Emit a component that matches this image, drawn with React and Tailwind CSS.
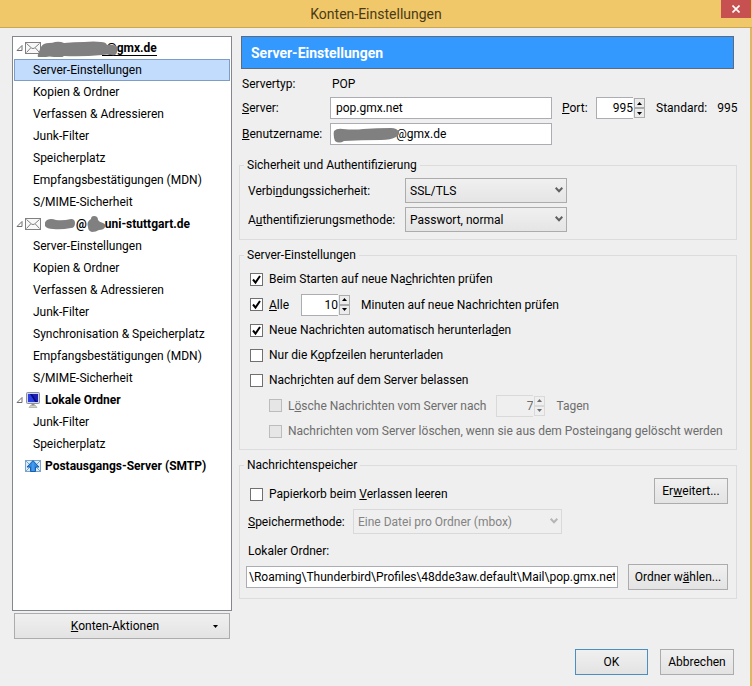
import { useState } from "react";
import clsx from "clsx";

/* ---------------- DATA ---------------- */

const ACCOUNTS = [
  {
    id: "gmx",
    icon: "mail",
    items: [
      "Server-Einstellungen",
      "Kopien & Ordner",
      "Verfassen & Adressieren",
      "Junk-Filter",
      "Speicherplatz",
      "Empfangsbestätigungen (MDN)",
      "S/MIME-Sicherheit",
    ],
  },
  {
    id: "uni",
    icon: "mail",
    items: [
      "Server-Einstellungen",
      "Kopien & Ordner",
      "Verfassen & Adressieren",
      "Junk-Filter",
      "Synchronisation & Speicherplatz",
      "Empfangsbestätigungen (MDN)",
      "S/MIME-Sicherheit",
    ],
  },
  {
    id: "local",
    icon: "computer",
    items: ["Junk-Filter", "Speicherplatz"],
  },
  { id: "smtp", icon: "outgoing", items: [] },
];

/* ---------------- ICONS ---------------- */

function MailIcon() {
  return (
    <svg className="h-3 w-4 shrink-0" viewBox="0 0 16 12" fill="none" stroke="#808080">
      <rect x="0.5" y="0.5" width="15" height="11" fill="#f8f8f8" />
      <path d="M1.5 1.5 6.5 6q1.5 1.2 3 0l5-4.5M1.5 10.5 5.8 5.8M14.5 10.5 10.2 5.8" />
    </svg>
  );
}

function ComputerIcon() {
  return (
    <svg className="h-4 w-4 shrink-0" viewBox="0 0 16 16">
      <rect x="1.5" y="0.5" width="13" height="11" rx="1" fill="#cfd3e2" stroke="#8b90a6" />
      <rect x="3" y="2" width="10" height="8" fill="#1a1fb8" />
      <path d="M3 2h3l5 8H3z" fill="#2b3fe0" />
      <path d="M5 2h2l5 8h-2z" fill="#0a0d7c" />
      <path d="M6.5 12h3v1.5h-3z" fill="#8f8f8f" />
      <path d="M4 15.5 5.5 13.5h5l1.5 2z" fill="#d5d5cf" stroke="#98988f" strokeWidth="0.6" />
    </svg>
  );
}

function OutgoingIcon() {
  return (
    <svg className="h-3 w-4 shrink-0" viewBox="0 0 16 12">
      <rect x="0.5" y="0.5" width="15" height="11" fill="#dcebf8" stroke="#7ba4cc" />
      <path d="m1 1 4 4M15 1l-4 4M1 11l4-4M15 11l-4-4" stroke="#7ba4cc" />
      <path d="M8 0.6 14 7h-3.5v4.5h-5V7H2z" fill="#2f8be6" stroke="#1a5eab" />
      <path d="M8 2.5V11" stroke="#5aa9f5" />
    </svg>
  );
}

function Twisty() {
  return (
    <svg className="h-2 w-2 shrink-0" viewBox="0 0 8 8" fill="#fff" stroke="#6e6e6e">
      <path d="M6 1.5v5H1z" />
    </svg>
  );
}

const ICONS = { mail: MailIcon, computer: ComputerIcon, outgoing: OutgoingIcon };

/* ---------------- CONTROLS ---------------- */

function PushButton({ primary, className, children }) {
  return (
    <button
      type="button"
      className={clsx(
        "h-[26px] border bg-linear-to-b from-[#f0f0f0] to-[#e3e3e3] whitespace-nowrap",
        primary ? "border-[#4a8fc4]" : "border-[#acacac]",
        className
      )}
    >
      {children}
    </button>
  );
}

function Spinner({ id, label, defaultValue, disabled }) {
  const [value, setValue] = useState(defaultValue);
  const step = clsx(
    "flex flex-1 items-center justify-center border",
    disabled ? "border-[#d9d9d9] text-[#6d6d6d]" : "border-[#acacac] bg-[#ececec] text-black"
  );

  return (
    <span className="flex h-[22px] items-stretch">
      <input
        id={id}
        aria-label={label}
        type="number"
        value={value}
        disabled={disabled}
        onChange={(e) => setValue(Number(e.target.value))}
        className="w-[37px] appearance-none border border-r-0 border-[#abadb3] bg-white text-right [-moz-appearance:textfield] disabled:border-[#d9d9d9] disabled:bg-[#efefef] disabled:text-[#6d6d6d] [&::-webkit-inner-spin-button]:appearance-none"
      />
      <span className="ml-px flex w-[11px] flex-col py-px">
        <button type="button" aria-label="Mehr" disabled={disabled} className={step} onClick={() => setValue(value + 1)}>
          <svg className="h-[3px] w-[5px]" viewBox="0 0 5 3" fill="currentColor">
            <path d="M0 3 2.5 0 5 3z" />
          </svg>
        </button>
        <button type="button" aria-label="Weniger" disabled={disabled} className={step} onClick={() => setValue(value - 1)}>
          <svg className="h-[3px] w-[5px]" viewBox="0 0 5 3" fill="currentColor">
            <path d="M0 0h5L2.5 3z" />
          </svg>
        </button>
      </span>
    </span>
  );
}

function Select({ id, width, disabled, children }) {
  return (
    <span className={clsx("relative", width)}>
      <select
        id={id}
        disabled={disabled}
        className="h-[25px] w-full appearance-none border border-[#acacac] bg-linear-to-b from-[#f0f0f0] to-[#e5e5e5] px-1 text-black disabled:border-[#d9d9d9] disabled:from-[#efefef] disabled:to-[#efefef] disabled:text-[#838383] disabled:opacity-100"
      >
        {children}
      </select>
      <svg
        className={clsx(
          "pointer-events-none absolute top-[9px] right-1 h-[6px] w-2",
          disabled ? "text-[#b5b5b5]" : "text-[#606060]"
        )}
        viewBox="0 0 8 6"
        fill="none"
        stroke="currentColor"
        strokeWidth="2"
      >
        <path d="m0.7 0.8 3.3 3.4L7.3 0.8" />
      </svg>
    </span>
  );
}

function Checkbox({ id, defaultChecked, disabled, children }) {
  return (
    <span className="flex items-center gap-1.5">
      <span className="relative flex h-[13px] w-[13px]">
        <input
          id={id}
          type="checkbox"
          defaultChecked={defaultChecked}
          disabled={disabled}
          className="peer h-[13px] w-[13px] appearance-none border border-[#707070] bg-white disabled:border-[#bcbcbc] disabled:bg-[#e6e6e6]"
        />
        <svg
          className="pointer-events-none absolute inset-0 hidden h-[13px] w-[13px] peer-checked:block"
          viewBox="0 0 13 13"
          fill="none"
          stroke="#000"
          strokeWidth="2"
        >
          <path d="m3 6.5 2.500 3 4.500-6.500" />
        </svg>
      </span>
      <label htmlFor={id} className={clsx("whitespace-nowrap", disabled && "text-[#6d6d6d]")}>
        {children}
      </label>
    </span>
  );
}

function Group({ title, className, children }) {
  return (
    <fieldset className={clsx("min-w-0 border border-[#dcdcdc] px-1", className)}>
      <legend className="px-[3px]">{title}</legend>
      {children}
    </fieldset>
  );
}

/* ---------------- ACCOUNT TREE ---------------- */

function AccountLabel({ id }) {
  if (id === "gmx") {
    return (
      <span className="relative">
        <span className="ml-[57px] border-b border-black pl-1">@gmx.de</span>
        <svg className="absolute top-0 -left-2 h-4 w-[84px]" viewBox="0 0 84 16" fill="#808080">
          <path d="M1 13 4 6q2-4 8-4 4 0 6-1 5-1 9 1 10-1 20-1 10-1 17 0 5 0 6 3 5-1 9 1 3 1 1 6-1 4-5 3-5-1-10 0-20 2-38 1-4 3-10 1-5-1-8 0-2 3-6 2-3-1-2-5z" />
        </svg>
      </span>
    );
  }
  if (id === "uni") {
    return (
      <span className="flex items-center">
        <svg className="h-3 w-[31px]" viewBox="0 0 31 12" fill="#808080">
          <path d="M2 2q4-2 9 0 7 1 15-1 4 0 4 4 0 5-4 5-10 2-18 1-6 0-8-3-1-4 2-6z" />
        </svg>
        @
        <svg className="h-4 w-[18px]" viewBox="0 0 18 16" fill="#808080">
          <path d="M1 6q1-2 3-3 0-3 3-3 4 0 4 4 1 2 5 3 3 1 2 4-1 3-6 3-3 2-7 2-4-1-4-5-1-3 0-5z" />
        </svg>
        uni-stuttgart.de
      </span>
    );
  }
  return id === "local" ? "Lokale Ordner" : "Postausgangs-Server (SMTP)";
}

function AccountTree() {
  const [selected, setSelected] = useState("gmx-0");

  return (
    <ul className="flex-1 border border-[#828790] bg-white px-px">
      {ACCOUNTS.map((account) => {
        const Icon = ICONS[account.icon];
        return (
          <li key={account.id}>
            <div className="flex h-[22px] items-center pl-0.5 font-bold">
              <span className="w-[9px]">{account.items.length > 0 && <Twisty />}</span>
              <Icon />
              <span className="ml-1 whitespace-nowrap">
                <AccountLabel id={account.id} />
              </span>
            </div>
            <ul>
              {account.items.map((item, i) => {
                const key = account.id + "-" + i;
                return (
                  <li key={key}>
                    <button
                      type="button"
                      onClick={() => setSelected(key)}
                      className={clsx(
                        "block h-[22px] w-full border pl-[18px] text-left whitespace-nowrap",
                        selected === key ? "border-[#7f9dc4] bg-[#c2dcfd]" : "border-transparent"
                      )}
                    >
                      {item}
                    </button>
                  </li>
                );
              })}
            </ul>
          </li>
        );
      })}
    </ul>
  );
}

/* ---------------- PAGE ---------------- */

export default function App() {
  return (
    <div className="flex min-h-screen flex-col bg-[#efefef] font-[Roboto,'Noto_Sans',sans-serif] text-[12px] leading-[18px] text-black">
      {/* Title bar */}
      <header className="relative flex h-7 items-center justify-center border-b border-[#c9a755] bg-[#f0c769]">
        <h1 className="text-[14px] text-[#4a3a16]">Konten-Einstellungen</h1>
        <button
          type="button"
          aria-label="Schließen"
          className="absolute top-0 right-px flex h-[18px] w-[30px] items-center justify-center bg-[#c75050]"
        >
          <svg className="h-2 w-2" viewBox="0 0 8 8" stroke="#fff" strokeWidth="1.6">
            <path d="m0.5 0.5 7 7M7.5 0.5l-7 7" />
          </svg>
        </button>
      </header>

      <main className="flex flex-1 flex-col border-r-2 border-[#dfb75f] pt-2 pb-[11px]">
        <div className="flex flex-1 gap-[7px] pr-[13px] pl-3">
          {/* Accounts */}
          <nav className="flex w-[220px] shrink-0 flex-col gap-0.5">
            <AccountTree />
            <PushButton className="relative mx-0.5">
              <span className="pr-3.5">
                <u>K</u>onten-Aktionen
              </span>
              <svg className="absolute top-[11px] right-[11px] h-[3px] w-[5px]" viewBox="0 0 5 3">
                <path d="M0 0h5L2.5 3z" />
              </svg>
            </PushButton>
          </nav>

          {/* Settings */}
          <form className="min-w-0 flex-1" onSubmit={(e) => e.preventDefault()}>
            <h2 className="mr-[3px] ml-0.5 flex h-[33px] items-center border border-[#5c6b7d] bg-[#3399ff] pl-[9px] text-[14px] font-bold text-white">
              Server-Einstellungen
            </h2>

            <div className="mt-1.5 grid grid-cols-[88px_1fr] items-center gap-y-1 pl-[3px]">
              <span>Servertyp:</span>
              <span className="pl-0.5">POP</span>

              <label htmlFor="server">
                <u>S</u>erver:
              </label>
              <div className="flex items-center">
                <input
                  id="server"
                  defaultValue="pop.gmx.net"
                  className="h-[22px] w-[222px] border border-[#abadb3] bg-white px-[5px]"
                />
                <label htmlFor="port" className="ml-2.5 w-[34px]">
                  <u>P</u>ort:
                </label>
                <Spinner id="port" defaultValue={995} />
                <span className="ml-[11px]">Standard:</span>
                <span className="ml-2.5">995</span>
              </div>

              <label htmlFor="user">
                <u>B</u>enutzername:
              </label>
              <div className="relative">
                <input
                  id="user"
                  defaultValue="@gmx.de"
                  className="block h-[22px] w-[222px] border border-[#abadb3] bg-white pl-[65px]"
                />
                <svg className="pointer-events-none absolute top-1 left-[3px] h-4 w-[67px]" viewBox="0 0 67 16" fill="#808080">
                  <path d="M1 4q3-3 9-2 12 1 20 0 14-1 28-1 6 0 8 4 1 3-3 5-5 3-15 3-20 0-37 1-5 3-9 0-2-5-1-10z" />
                </svg>
              </div>
            </div>

            <Group title="Sicherheit und Authentifizierung" className="mt-[11px] pb-[7px]">
              <div className="grid grid-cols-[157px_1fr] items-center gap-y-1 pt-1 pl-1">
                <label htmlFor="security">
                  Verbi<u>n</u>dungssicherheit:
                </label>
                <Select id="security" width="flex w-[162px]">
                  <option>SSL/TLS</option>
                </Select>
                <label htmlFor="auth">
                  A<u>u</u>thentifizierungsmethode:
                </label>
                <Select id="auth" width="flex w-[162px]">
                  <option>Passwort, normal</option>
                </Select>
              </div>
            </Group>

            <Group title="Server-Einstellungen" className="mt-1.5 pb-[7px]">
              <div className="grid grid-rows-[22px_23px_22px_22px_22px_23px_22px] gap-y-[3px] pt-1 pl-1.5">
                <Checkbox id="startup" defaultChecked>
                  Beim Starten auf neue Na<u>c</u>hrichten prüfen
                </Checkbox>
                <div className="flex items-center">
                  <Checkbox id="interval" defaultChecked>
                    <u>A</u>lle
                  </Checkbox>
                  <span className="ml-3 flex items-center gap-[11px]">
                    <Spinner label="Minuten" defaultValue={10} />
                    <span>Minuten auf neue Nachrichten prüfen</span>
                  </span>
                </div>
                <Checkbox id="download" defaultChecked>
                  Neue Nachrichten automatisch herunterla<u>d</u>en
                </Checkbox>
                <Checkbox id="headers">
                  Nur die K<u>o</u>pfzeilen herunterladen
                </Checkbox>
                <Checkbox id="keep">
                  Nachr<u>i</u>chten auf dem Server belassen
                </Checkbox>
                <div className="flex items-center pl-[19px] text-[#6d6d6d]">
                  <Checkbox id="age" disabled>
                    L<u>ö</u>sche Nachrichten vom Server nach
                  </Checkbox>
                  <span className="ml-2.5 flex items-center gap-[11px]">
                    <Spinner label="Tage" defaultValue={7} disabled />
                    <span>Tagen</span>
                  </span>
                </div>
                <div className="flex items-center pl-[19px]">
                  <Checkbox id="purge" disabled>
                    Nachrichten vom Server löschen, wenn sie aus dem Postein<u>g</u>ang gelöscht werden
                  </Checkbox>
                </div>
              </div>
            </Group>

            <Group title="Nachrichtenspeicher" className="mt-1.5 pb-2">
              <div className="flex items-end justify-between pt-1 pr-1 pl-1.5">
                <span className="flex h-5 items-center">
                  <Checkbox id="trash">
                    Papierkorb beim <u>V</u>erlassen leeren
                  </Checkbox>
                </span>
                <PushButton className="w-[74px]">
                  Er<u>w</u>eitert...
                </PushButton>
              </div>
              <div className="mt-[5px] flex items-center pl-1">
                <label htmlFor="store" className="w-[105px]">
                  <u>S</u>peichermethode:
                </label>
                <Select id="store" width="flex w-[209px]" disabled>
                  <option>Eine Datei pro Ordner (mbox)</option>
                </Select>
              </div>
              <label htmlFor="folder" className="mt-2 block pl-1">
                Lokaler Ordner:
              </label>
              <div className="mt-1 flex items-center gap-2.5 pr-1 pl-0.5">
                <input
                  id="folder"
                  readOnly
                  defaultValue="\Roaming\Thunderbird\Profiles\48dde3aw.default\Mail\pop.gmx.net"
                  className="h-[22px] min-w-0 flex-1 border border-[#abadb3] bg-white px-0.5"
                />
                <PushButton className="w-[100px]">
                  Ordner w<u>ä</u>hlen...
                </PushButton>
              </div>
            </Group>
          </form>
        </div>

        {/* Dialog buttons */}
        <footer className="mt-2.5 flex justify-end gap-3 pr-4">
          <PushButton primary className="w-[73px]">
            OK
          </PushButton>
          <PushButton className="w-[74px]">Abbrechen</PushButton>
        </footer>
      </main>
    </div>
  );
}
